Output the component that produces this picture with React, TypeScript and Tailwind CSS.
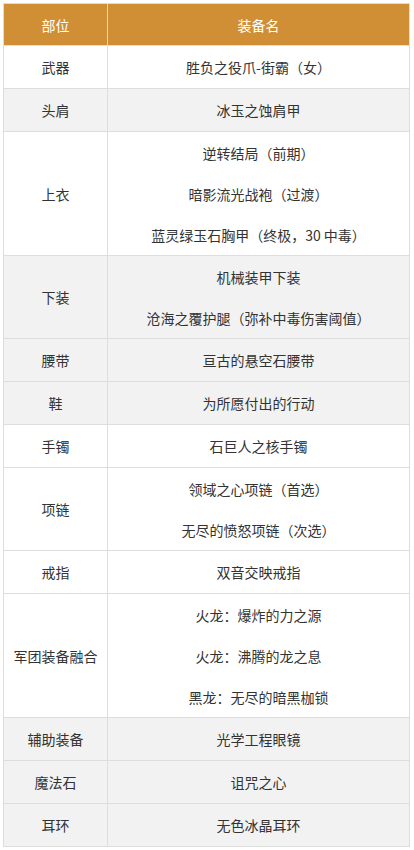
import React from "react";

type Row = { part: string; items: string[]; gray: boolean };

const rows: Row[] = [
  { part: "武器", items: ["胜负之役爪-街霸（女）"], gray: false },
  { part: "头肩", items: ["冰玉之蚀肩甲"], gray: true },
  { part: "上衣", items: ["逆转结局（前期）", "暗影流光战袍（过渡）", "蓝灵绿玉石胸甲（终极，30 中毒）"], gray: false },
  { part: "下装", items: ["机械装甲下装", "沧海之覆护腿（弥补中毒伤害阈值）"], gray: true },
  { part: "腰带", items: ["亘古的悬空石腰带"], gray: true },
  { part: "鞋", items: ["为所愿付出的行动"], gray: true },
  { part: "手镯", items: ["石巨人之核手镯"], gray: false },
  { part: "项链", items: ["领域之心项链（首选）", "无尽的愤怒项链（次选）"], gray: false },
  { part: "戒指", items: ["双音交映戒指"], gray: false },
  { part: "军团装备融合", items: ["火龙：爆炸的力之源", "火龙：沸腾的龙之息", "黑龙：无尽的暗黑枷锁"], gray: false },
  { part: "辅助装备", items: ["光学工程眼镜"], gray: true },
  { part: "魔法石", items: ["诅咒之心"], gray: true },
  { part: "耳环", items: ["无色冰晶耳环"], gray: true },
];

export default function App() {
  return (
    <div
      className="w-[414px] h-[850px] bg-white pt-[3px] pl-[3px]"
      style={{ fontFamily: '"Microsoft YaHei", "Noto Sans CJK SC", "Noto Sans", sans-serif' }}
    >
      <table className="w-[407px] border-collapse text-[14px] leading-[20px] text-[#333]">
        <thead>
          <tr className="bg-[#d08f35] text-white">
            <th className="w-[104px] p-0 border border-[#ddd] border-r-[#f0d7b0] font-normal text-center">
              <div className="h-[41px] flex items-center justify-center">部位</div>
            </th>
            <th className="p-0 border border-[#ddd] font-normal text-center">
              <div className="h-[41px] flex items-center justify-center">装备名</div>
            </th>
          </tr>
        </thead>
        <tbody>
          {rows.map((r) => (
            <tr key={r.part} className={r.gray ? "bg-[#f2f2f2]" : "bg-white"}>
              <td className="w-[104px] p-0 border border-[#ddd] text-center align-middle">{r.part}</td>
              <td className="p-0 border border-[#ddd] text-center align-middle">
                <div className="flex flex-col">
                  {r.items.map((t) => (
                    <div
                      key={t}
                      className={
                        r.items.length === 1
                          ? "h-[42px] flex items-center justify-center"
                          : "h-[41px] flex items-center justify-center"
                      }
                    >
                      {t}
                    </div>
                  ))}
                </div>
              </td>
            </tr>
          ))}
        </tbody>
      </table>
    </div>
  );
}
